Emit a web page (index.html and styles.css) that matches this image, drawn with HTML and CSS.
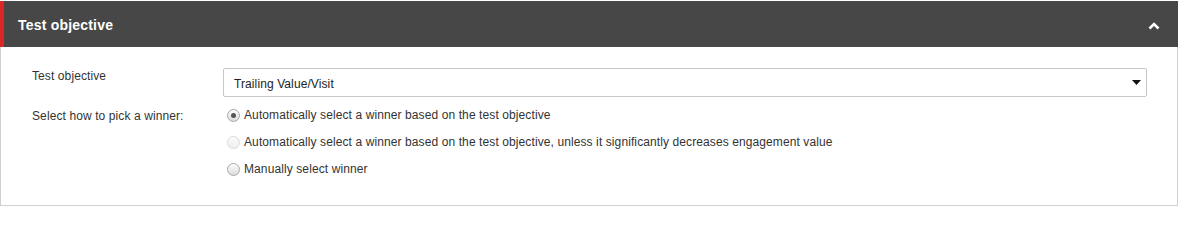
FILE: index.html
```html
<!DOCTYPE html>
<html>
<head>
<meta charset="utf-8">
<link rel="stylesheet" href="styles.css">
</head>
<body>
<div class="panel">
  <div class="panel-head">
    <span class="panel-title">Test objective</span>
    <svg class="chev" width="12" height="8" viewBox="0 0 12 8"><path d="M1.5 6.5 L6 2 L10.5 6.5" fill="none" stroke="#fff" stroke-width="2.6"/></svg>
  </div>
  <div class="panel-body">
    <div class="row">
      <div class="label">Test objective</div>
      <div class="field">
        <div class="select">
          <span>Trailing Value/Visit</span>
          <svg class="caret" width="9" height="5" viewBox="0 0 9 5"><path d="M0 0 H9 L4.5 5 Z" fill="#111"/></svg>
        </div>
      </div>
    </div>
    <div class="row row-radios">
      <div class="label">Select how to pick a winner:</div>
      <div class="field radios">
        <label class="radio"><span class="dot checked"></span>Automatically select a winner based on the test objective</label>
        <label class="radio"><span class="dot disabled"></span>Automatically select a winner based on the test objective, unless it significantly decreases engagement value</label>
        <label class="radio"><span class="dot"></span>Manually select winner</label>
      </div>
    </div>
  </div>
</div>
</body>
</html>
```
FILE: styles.css
```css
html, body {
  margin: 0;
  padding: 0;
  background: #fff;
}
body {
  font-family: "Liberation Sans", Arial, sans-serif;
  font-size: 12px;
  letter-spacing: 0.1px;
  color: #333;
}
.panel {
  width: 1178px;
  margin-top: 1px;
}
.panel-head {
  height: 46px;
  background: #474747;
  border-left: 4px solid #dc2727;
  display: flex;
  align-items: center;
  justify-content: space-between;
  padding: 0 18px 0 14px;
}
.panel-title {
  color: #fff;
  font-weight: bold;
  font-size: 14px;
  letter-spacing: 0.2px;
  padding-top: 1px;
}
.chev {
  display: block;
  margin-top: 3px;
}
.panel-body {
  border: 1px solid #cfcfcf;
  border-top: none;
  height: 159px;
  padding: 21px 0 0 31px;
  box-sizing: border-box;
}
.row {
  display: flex;
}
.label {
  width: 191px;
  flex: none;
  line-height: 14px;
  padding-top: 1px;
}
.field {
  flex: none;
  width: 924px;
}
.select {
  height: 27px;
  border: 1px solid #c6c6c6;
  border-radius: 2px;
  display: flex;
  align-items: center;
  justify-content: space-between;
  padding: 0 5px 0 10px;
  color: #222;
}
.select span {
  padding-top: 2px;
}
.caret {
  display: block;
}
.row-radios {
  margin-top: 11px;
}
.radios {
  display: flex;
  flex-direction: column;
  gap: 13px;
}
.radio {
  display: flex;
  align-items: center;
  height: 14px;
  line-height: 14px;
  color: #333;
}
.dot {
  width: 11px;
  height: 11px;
  border-radius: 50%;
  border: 1px solid #a9a9a9;
  background: linear-gradient(#fdfdfd, #dcdcdc);
  margin: 0 4px 0 4px;
  position: relative;
  flex: none;
}
.dot.checked::after {
  content: "";
  position: absolute;
  left: 3px;
  top: 3px;
  width: 5px;
  height: 5px;
  border-radius: 50%;
  background: #555;
}
.dot.disabled {
  border-color: #dadada;
  background: linear-gradient(#fbfbfb, #efefef);
}
```
